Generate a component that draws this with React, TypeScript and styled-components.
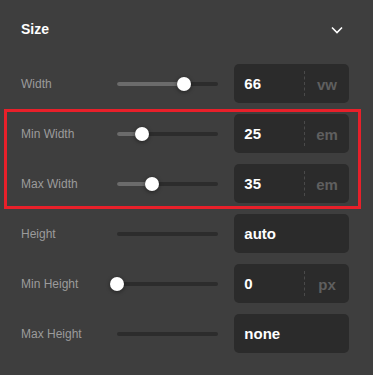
import React from 'react';
import styled, { createGlobalStyle } from 'styled-components';

const GlobalStyle = createGlobalStyle`
  html, body {
    margin: 0;
    padding: 0;
    background: #3e3e3e;
    font-family: "Liberation Sans", Arial, sans-serif;
  }
`;

const Panel = styled.div`
  width: 373px;
  height: 375px;
  box-sizing: border-box;
  padding: 0 24px 0 20px;
  background: #3e3e3e;
`;

const Header = styled.div`
  height: 58px;
  display: flex;
  align-items: center;
  justify-content: space-between;
  margin-bottom: 6px;
`;

const Title = styled.h3`
  margin: 0;
  font-size: 14px;
  font-weight: 700;
  color: #ffffff;
  padding-left: 1px;
`;

const Chevron = styled.svg`
  width: 12px;
  height: 8px;
  margin-right: 6px;
  margin-top: 1px;
`;

const Rows = styled.div`
  display: flex;
  flex-direction: column;
  gap: 11px;
`;

const Highlight = styled.div`
  position: relative;
  display: flex;
  flex-direction: column;
  gap: 11px;

  &::before {
    content: '';
    position: absolute;
    top: -5px;
    bottom: -6px;
    left: -16px;
    right: -12px;
    border: 3.5px solid #e8202a;
    pointer-events: none;
  }
`;

const Row = styled.div`
  height: 39px;
  display: flex;
  align-items: center;
`;

const Label = styled.span`
  width: 96px;
  font-size: 12px;
  color: #9b9b9b;
  padding-left: 1px;
`;

const Track = styled.div`
  position: relative;
  width: 102px;
  height: 4px;
  margin-top: 1px;
  background: #2c2c2c;
  border-radius: 2px;
  margin-right: 16px;
`;

const Fill = styled.div`
  height: 100%;
  background: #6b6b6b;
  border-radius: 2px;
`;

const Thumb = styled.div`
  position: absolute;
  top: 50%;
  width: 14px;
  height: 14px;
  border-radius: 50%;
  background: #ffffff;
  transform: translate(-50%, -50%);
  box-shadow: 0 1px 4px rgba(0, 0, 0, 0.45);
`;

const Field = styled.div`
  width: 115px;
  height: 39px;
  box-sizing: border-box;
  display: flex;
  align-items: center;
  background: #2b2b2b;
  border-radius: 5px;
`;

const Value = styled.span`
  flex: 1;
  padding-left: 10px;
  font-size: 15px;
  font-weight: 700;
  color: #ffffff;
`;

const Unit = styled.span`
  width: 45px;
  height: 25px;
  display: flex;
  align-items: center;
  justify-content: center;
  border-left: 1px dashed #4a4a4a;
  font-size: 15px;
  font-weight: 700;
  color: #5f5f5f;
  padding-top: 2px;
  box-sizing: border-box;
`;

interface SizeRowProps {
  label: string;
  value: string;
  unit?: string;
  percent?: number;
}

const SizeRow: React.FC<SizeRowProps> = ({ label, value, unit, percent }) => (
  <Row>
    <Label>{label}</Label>
    <Track>
      {percent !== undefined && (
        <>
          <Fill style={{ width: `${percent}%` }} />
          <Thumb style={{ left: `${percent}%` }} />
        </>
      )}
    </Track>
    <Field>
      <Value>{value}</Value>
      {unit && <Unit>{unit}</Unit>}
    </Field>
  </Row>
);

const App: React.FC = () => {
  return (
    <>
      <GlobalStyle />
      <Panel>
        <Header>
          <Title>Size</Title>
          <Chevron viewBox="0 0 12 8" fill="none" stroke="#ffffff" strokeWidth="1.6">
            <path d="M1 1.5l5 5 5-5" />
          </Chevron>
        </Header>
        <Rows>
          <SizeRow label="Width" value="66" unit="vw" percent={66} />
          <Highlight>
            <SizeRow label="Min Width" value="25" unit="em" percent={25} />
            <SizeRow label="Max Width" value="35" unit="em" percent={35} />
          </Highlight>
          <SizeRow label="Height" value="auto" />
          <SizeRow label="Min Height" value="0" unit="px" percent={0} />
          <SizeRow label="Max Height" value="none" />
        </Rows>
      </Panel>
    </>
  );
};

export default App;
